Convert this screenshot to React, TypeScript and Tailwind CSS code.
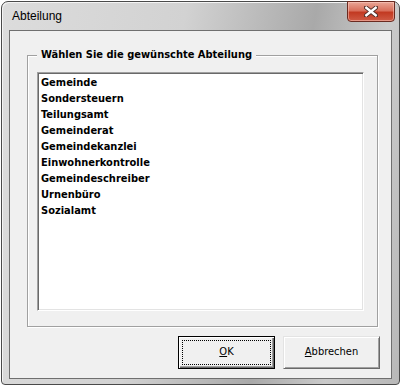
export default function App() {
  const items = [
    "Gemeinde",
    "Sondersteuern",
    "Teilungsamt",
    "Gemeinderat",
    "Gemeindekanzlei",
    "Einwohnerkontrolle",
    "Gemeindeschreiber",
    "Urnenbüro",
    "Sozialamt",
  ];

  const tahoma = "font-['DejaVu_Sans_Condensed','DejaVu_Sans',sans-serif] font-stretch-condensed";

  return (
    <div className="w-[401px] h-[386px] bg-white p-[1px]">
      <div className="w-[399px] h-[384px] flex flex-col border border-[#4a4a4a] rounded-t-[7px] rounded-b-[4px] bg-[linear-gradient(100deg,#dcdcdc_0%,#d2d2d2_40%,#a9a9a9_68%,#cacaca_84%,#b8b8b8_100%)] shadow-[inset_1px_1px_0_#f4f4f4]">
        {/* title bar */}
        <div className="h-[28px] flex justify-between">
          <div className="pl-[10px] pt-[7px] text-[12px] leading-[15px] text-black font-['Liberation_Sans',sans-serif]">
            Abteilung
          </div>
          <div className="mr-[4px] w-[48px] h-[21px] -mt-[1px] flex items-center justify-center rounded-b-[4px] border border-[#6b2a20] bg-[linear-gradient(180deg,#e9a696_0%,#d9705c_45%,#c23a22_55%,#cf5b45_100%)] shadow-[inset_0_0_0_1px_rgba(255,210,200,0.5)]">
            <svg width="14" height="11" viewBox="0 0 14 11">
              <path d="M2 1.5 L12 9.5 M12 1.5 L2 9.5" stroke="#4a2a24" strokeWidth="4.2" strokeLinecap="square" />
              <path d="M2.3 1.8 L11.7 9.2 M11.7 1.8 L2.3 9.2" stroke="#ffffff" strokeWidth="2.4" strokeLinecap="square" />
            </svg>
          </div>
        </div>

        {/* client area */}
        <div className="mx-[7px] h-[349px] border border-[#6f6f6f] bg-[#f0f0f0] flex flex-col">
          <div className="ml-[17px] mt-[24px] w-[351px] h-[272px] relative border border-[#a0a0a0] shadow-[inset_1px_1px_0_#ffffff,1px_1px_0_#ffffff]">
            <span className={`absolute left-[9px] -top-[8px] px-[4px] bg-[#f0f0f0] text-[11px] leading-[14px] font-bold text-black ${tahoma}`}>
              Wählen Sie die gewünschte Abteilung
            </span>
            <div className="ml-[9px] mt-[16px] w-[327px] h-[239px] bg-white border border-t-[#a0a0a0] border-l-[#a0a0a0] border-b-white border-r-white shadow-[inset_1px_1px_0_#696969,inset_-1px_-1px_0_#e3e3e3] px-[1px] pt-[2px]">
              {items.map((it) => (
                <div key={it} className={`h-[16px] leading-[16px] pl-[2px] text-[11px] font-bold text-black ${tahoma}`}>
                  {it}
                </div>
              ))}
            </div>
          </div>

          <div className="mt-[9px] ml-[168px] flex gap-[8px]">
            <button className="w-[97px] h-[33px] flex border border-black bg-[#f0f0f0] shadow-[inset_1px_1px_0_#ffffff,inset_-1px_-1px_0_#696969,inset_-2px_-2px_0_#a0a0a0]">
              <span className={`m-[3px] flex-1 flex items-center justify-center border border-dotted border-black text-[11px] text-black ${tahoma}`}>
                <span><u>O</u>K</span>
              </span>
            </button>
            <button className={`w-[97px] h-[33px] flex items-center justify-center border border-t-[#e3e3e3] border-l-[#e3e3e3] border-r-[#696969] border-b-[#696969] bg-[#f0f0f0] shadow-[inset_1px_1px_0_#ffffff,inset_-1px_-1px_0_#a0a0a0] text-[11px] text-black ${tahoma}`}>
              <span><u>A</u>bbrechen</span>
            </button>
          </div>
        </div>
      </div>
    </div>
  );
}
